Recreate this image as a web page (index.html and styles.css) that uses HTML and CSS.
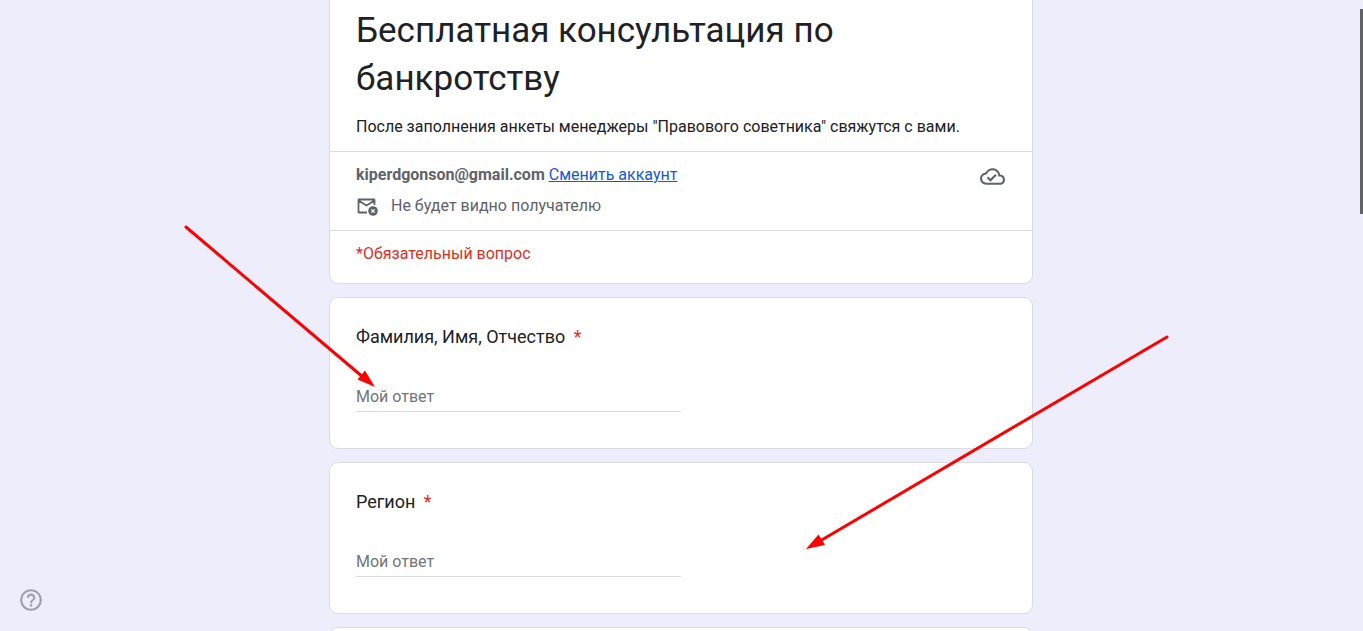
FILE: index.html
```html
<!DOCTYPE html>
<html lang="ru">
<head>
    <meta charset="UTF-8">
    <meta name="viewport" content="width=device-width, initial-scale=1.0">
    <title>Бесплатная консультация по банкротству</title>
    <link rel="stylesheet" href="styles.css">
</head>
<body>

    <form class="form">
        <div class="card card-header">
            <div class="intro">
                <h1>Бесплатная консультация по банкротству</h1>
                <p>После заполнения анкеты менеджеры "Правового советника" свяжутся с вами.</p>
            </div>

            <div class="account">
                <div class="account-info">
                    <div class="account-line">
                        <span><b>kiperdgonson@gmail.com</b> <a href="#">Сменить аккаунт</a></span>
                    </div>
                    <div class="account-line">
                        <svg class="mail-icon" width="22" height="22" viewBox="0 0 22 22">
                            <path d="M11 17.500H3Q2.500 17.500 2.500 17V5Q2.500 4.500 3 4.500H18Q18.500 4.500 18.500 5V10M2.500 5.500L10.500 10.500L18.500 5.500" fill="none" stroke="#5f6368" stroke-width="1.800"/>
                            <circle cx="17" cy="16" r="4.800" fill="#5f6368"/>
                            <path d="M15.300 14.300L18.700 17.700M18.700 14.300L15.300 17.700" stroke="#fff" stroke-width="1.200"/>
                        </svg>
                        <span>Не будет видно получателю</span>
                    </div>
                </div>
                <svg class="cloud-icon" width="25" height="25" viewBox="0 0 24 24" fill="#5f6368">
                    <path d="M19.350 10.040C18.670 6.590 15.640 4 12 4 9.110 4 6.610 5.640 5.360 8.040 2.350 8.360 0 10.900 0 14c0 3.310 2.690 6 6 6h13c2.760 0 5-2.240 5-5 0-2.640-2.050-4.780-4.650-4.960zM19 18H6c-2.210 0-4-1.790-4-4 0-2.050 1.530-3.760 3.560-3.970l1.070-.110.500-.950C8.080 7.140 9.940 6 12 6c2.620 0 4.880 1.860 5.390 4.430l.300 1.500 1.530.110c1.560.100 2.780 1.410 2.780 2.960 0 1.650-1.350 3-3 3zm-9-3.820l-2.090-2.090L6.500 13.500 10 17l6.010-6.010-1.410-1.410z"/>
                </svg>
            </div>

            <div class="required-note">*Обязательный вопрос</div>
        </div>

        <div class="card question">
            <label for="name">Фамилия, Имя, Отчество <span class="star">*</span></label>
            <input type="text" id="name" name="name" placeholder="Мой ответ">
        </div>

        <div class="card question">
            <label for="region">Регион <span class="star">*</span></label>
            <input type="text" id="region" name="region" placeholder="Мой ответ">
        </div>

        <div class="card question"></div>
    </form>

    <button class="help" type="button" aria-label="Справка">
        <svg width="26" height="26" viewBox="0 0 24 24" fill="#a0a0aa">
            <path d="M11 18h2v-2h-2v2zm1-16C6.480 2 2 6.480 2 12s4.480 10 10 10 10-4.480 10-10S17.520 2 12 2zm0 18c-4.410 0-8-3.590-8-8s3.590-8 8-8 8 3.590 8 8-3.590 8-8 8zm0-14c-2.210 0-4 1.790-4 4h2c0-1.100.900-2 2-2s2 .900 2 2c0 2-3 1.750-3 5h2c0-2.250 3-2.500 3-5 0-2.210-1.790-4-4-4z"/>
        </svg>
    </button>

    <div class="scroll-thumb"></div>

    <!-- arrows pointing at the answer fields -->
    <svg class="arrows" width="1363" height="631" viewBox="0 0 1363 631">
        <path d="M186 227L364 378M1167 337L820 541" stroke="#f00" stroke-width="3" stroke-linecap="round"/>
        <path d="M375 387L357.500 379.500L365 370.500ZM806 549L818.500 534.500L825 545Z" fill="#f00"/>
    </svg>

</body>
</html>
```

FILE: styles.css
```css
* {
    box-sizing: border-box;
}
body {
    margin: 0;
    padding-right: 1px;
    height: 100vh;
    overflow: hidden;
    background-color: #eeedfb;
    color: #202124;
    font-family: Roboto, "Liberation Sans", sans-serif;
    font-size: 16px;
    line-height: 24px;
}
.form {
    display: flex;
    flex-direction: column;
    gap: 13px;
    width: 100%;
    max-width: 704px;
    margin: 0 auto;
}
.card {
    background-color: white;
    border: 1px solid #dadce0;
    border-radius: 9px;
}
.card-header {
    border-top: none;
    border-radius: 0 0 9px 9px;
}
.intro {
    padding: 7px 26px 12px;
}
h1 {
    margin: 0 0 12px;
    font-size: 35px;
    font-weight: 400;
    line-height: 48px;
}
p {
    margin: 0;
}
.account {
    display: flex;
    justify-content: space-between;
    align-items: flex-start;
    padding: 11px 26px 12px;
    border-top: 1px solid #dadce0;
    border-bottom: 1px solid #dadce0;
    color: #5f6368;
    font-size: 16px;
}
.account-info {
    display: flex;
    flex-direction: column;
    gap: 7px;
}
.account-line {
    display: flex;
    align-items: center;
    gap: 13px;
}
.account a {
    color: #1558d6;
}
.cloud-icon {
    margin: 1px 1px 0 0;
}
.required-note {
    padding: 11px 26px 17px;
    color: #d93025;
}
.question {
    display: flex;
    flex-direction: column;
    gap: 35px;
    padding: 27px 26px 36px;
}
.question label {
    font-size: 18px;
}
.star {
    margin-left: 4px;
    color: #d93025;
}
.question input {
    width: 50%;
    height: 28px;
    padding: 0 0 3px;
    border: none;
    border-bottom: 1px solid #dadce0;
    outline: none;
    background: none;
    font-family: inherit;
    font-size: 16px;
}
.question input::placeholder {
    color: #70757a;
}
.help {
    position: absolute;
    left: 18px;
    bottom: 18px;
    display: flex;
    padding: 0;
    border: none;
    background: none;
    cursor: pointer;
}
.scroll-thumb {
    position: absolute;
    top: 9px;
    right: 0;
    width: 3px;
    height: 205px;
    background-color: #5f6368;
}
.arrows {
    position: absolute;
    top: 0;
    left: 0;
    pointer-events: none;
}
```
